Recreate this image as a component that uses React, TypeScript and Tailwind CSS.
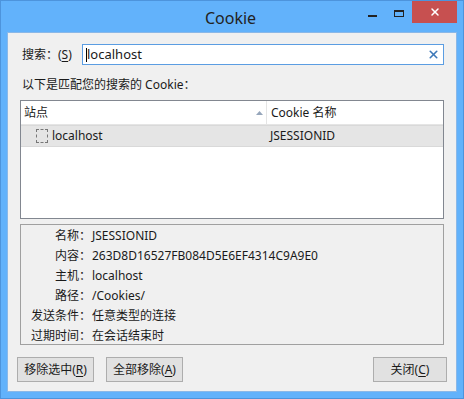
import { X } from 'lucide-react'

const font = { fontFamily: '"Noto Sans", "Noto Sans CJK SC", sans-serif' }

const details = [
  { k: '名称', v: 'JSESSIONID' },
  { k: '内容', v: '263D8D16527FB084D5E6EF4314C9A9E0' },
  { k: '主机', v: 'localhost' },
  { k: '路径', v: '/Cookies/' },
  { k: '发送条件', v: '任意类型的连接' },
  { k: '过期时间', v: '在会话结束时' },
]

function Btn({ label, k, className }: { label: string; k: string; className: string }) {
  return (
    <button className={`flex h-[25px] items-center justify-center border border-[#adadad] bg-[#e1e1e1] text-[12px] text-[#1a1a1a] ${className}`}>
      {label}(<span className="underline underline-offset-2">{k}</span>)
    </button>
  )
}

export default function App() {
  return (
    <div className="h-[399px] w-[464px] border border-[#4d94dc] bg-[#62b2fb]" style={font}>
      <div className="flex h-[31px] items-start">
        <div className="flex-1 pt-[5px] pl-[110px] text-center text-[16px] text-[#222]">Cookie</div>
        <div className="mt-[14px] ml-[18px] h-[2px] w-[9px] bg-[#222]" />
        <div className="mt-[9px] ml-[17px] h-[7px] w-[10px] border border-t-2 border-[#222]" />
        <div className="ml-[8px] flex h-[22px] w-[45px] items-center justify-center bg-[#c75050]">
          <X className="h-[12px] w-[12px] text-white" strokeWidth={3} />
        </div>
        <div className="w-[6px]" />
      </div>
      <div className="mx-[6px] flex h-[360px] flex-col border border-[#8ab8e8] bg-[#f0f0f0] px-[12px] text-[12px] text-[#1a1a1a]">
        <div className="mt-[11px] flex h-[21px] items-center">
          <div className="ml-[2px] w-[60px]">
            搜索：(<span className="underline underline-offset-2">S</span>)
          </div>
          <div className="flex h-[21px] flex-1 items-center border border-[#5b9de2] bg-white pl-[3px] pr-[3px] text-[13px]">
            <span className="h-[14px] w-px bg-black" />
            <span className="flex-1">localhost</span>
            <X className="h-[13px] w-[13px] text-[#3d78b8]" strokeWidth={3} />
          </div>
        </div>
        <div className="mt-[10px] ml-[2px] h-[20px] leading-[20px]">以下是匹配您的搜索的 Cookie：</div>
        <div className="mt-[5px] h-[119px] border border-[#828790] bg-white">
          <div className="flex h-[24px] items-center border-b border-[#e5e5e5]">
            <div className="flex w-[245px] items-center justify-between pl-[3px]">
              <span>站点</span>
              <svg width="7" height="4" viewBox="0 0 7 4" className="mr-[3px]">
                <path d="M0 4 L3.5 0 L7 4 Z" fill="#96a6bb" />
              </svg>
            </div>
            <div className="h-full w-px bg-[#e5e5e5]" />
            <div className="pl-[4px]">Cookie 名称</div>
          </div>
          <div className="flex h-[22px] items-center border-y border-[#d9d9d9] bg-[#e5e5e5]">
            <div className="flex w-[246px] items-center pl-[15px]">
              <span className="mr-[4px] h-[14px] w-[12px] border border-dashed border-[#777]" />
              <span>localhost</span>
            </div>
            <div className="pl-[3px]">JSESSIONID</div>
          </div>
        </div>
        <div className="mt-[5px] h-[121px] border border-[#a0a0a0] pt-[1px]">
          {details.map((d) => (
            <div key={d.k} className="flex h-[20px] items-center">
              <div className="w-[70px] text-right">{d.k}：</div>
              <div className="ml-[1px]">{d.v}</div>
            </div>
          ))}
        </div>
        <div className="mt-[12px] flex">
          <Btn label="移除选中" k="R" className="-ml-[3px] w-[77px]" />
          <Btn label="全部移除" k="A" className="ml-[12px] w-[77px]" />
          <div className="flex-1" />
          <Btn label="关闭" k="C" className="-mr-[3px] w-[74px]" />
        </div>
      </div>
    </div>
  )
}
